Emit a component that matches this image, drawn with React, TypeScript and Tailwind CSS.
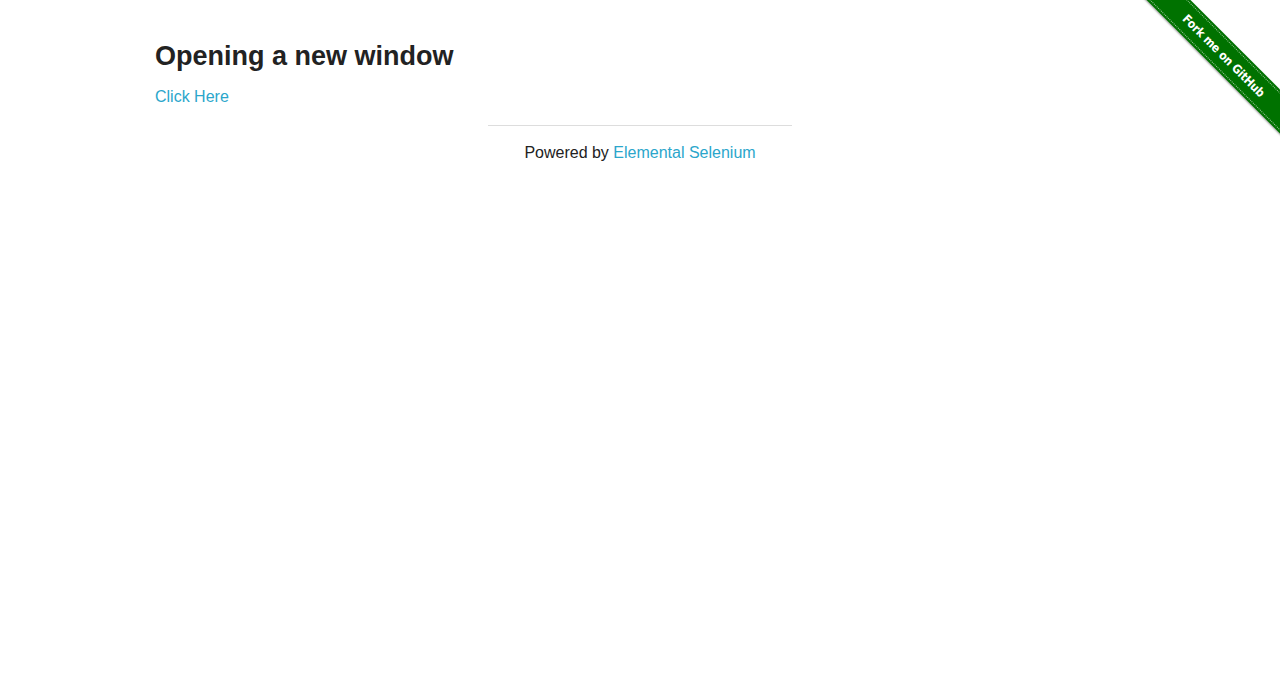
import React from "react";

const ForkRibbon = () => (
  <div className="absolute top-0 right-0 w-[149px] h-[149px] overflow-hidden pointer-events-none">
    <a
      href="#"
      className="absolute left-[-22px] top-[40px] w-[230px] h-[31px] rotate-45 bg-[#007200] flex items-center justify-center shadow-[0_1px_2px_rgba(0,0,0,0.4)]"
    >
      <span className="absolute inset-x-0 top-[2px] border-t border-dotted border-white/60" />
      <span className="absolute inset-x-0 bottom-[2px] border-b border-dotted border-white/60" />
      <span className="text-white text-[12px] font-bold tracking-[-0.2px] [font-family:'DejaVu_Sans_Condensed','Liberation_Sans',sans-serif]">
        Fork me on GitHub
      </span>
    </a>
  </div>
);

export default function App() {
  return (
    <div className="relative min-h-[675px] bg-white text-[#222222] [font-family:'Liberation_Sans',Arial,sans-serif]">
      <ForkRibbon />
      <div className="mx-auto max-w-[1000px] px-[15px] pt-[40px]">
        <h3 className="text-[27px] font-bold leading-[1.2] mb-[13px]">Opening a new window</h3>
        <a href="#" className="text-[16px] text-[#2ba6cb] leading-[1.3]">
          Click Here
        </a>
      </div>
      <div className="mt-[16px] flex flex-col items-center">
        <hr className="w-[304px] border-t border-[#dddddd]" />
        <div className="mt-[17px] text-[16px] leading-[1.3]">
          Powered by{" "}
          <a href="#" className="text-[#2ba6cb]">
            Elemental Selenium
          </a>
        </div>
      </div>
    </div>
  );
}
